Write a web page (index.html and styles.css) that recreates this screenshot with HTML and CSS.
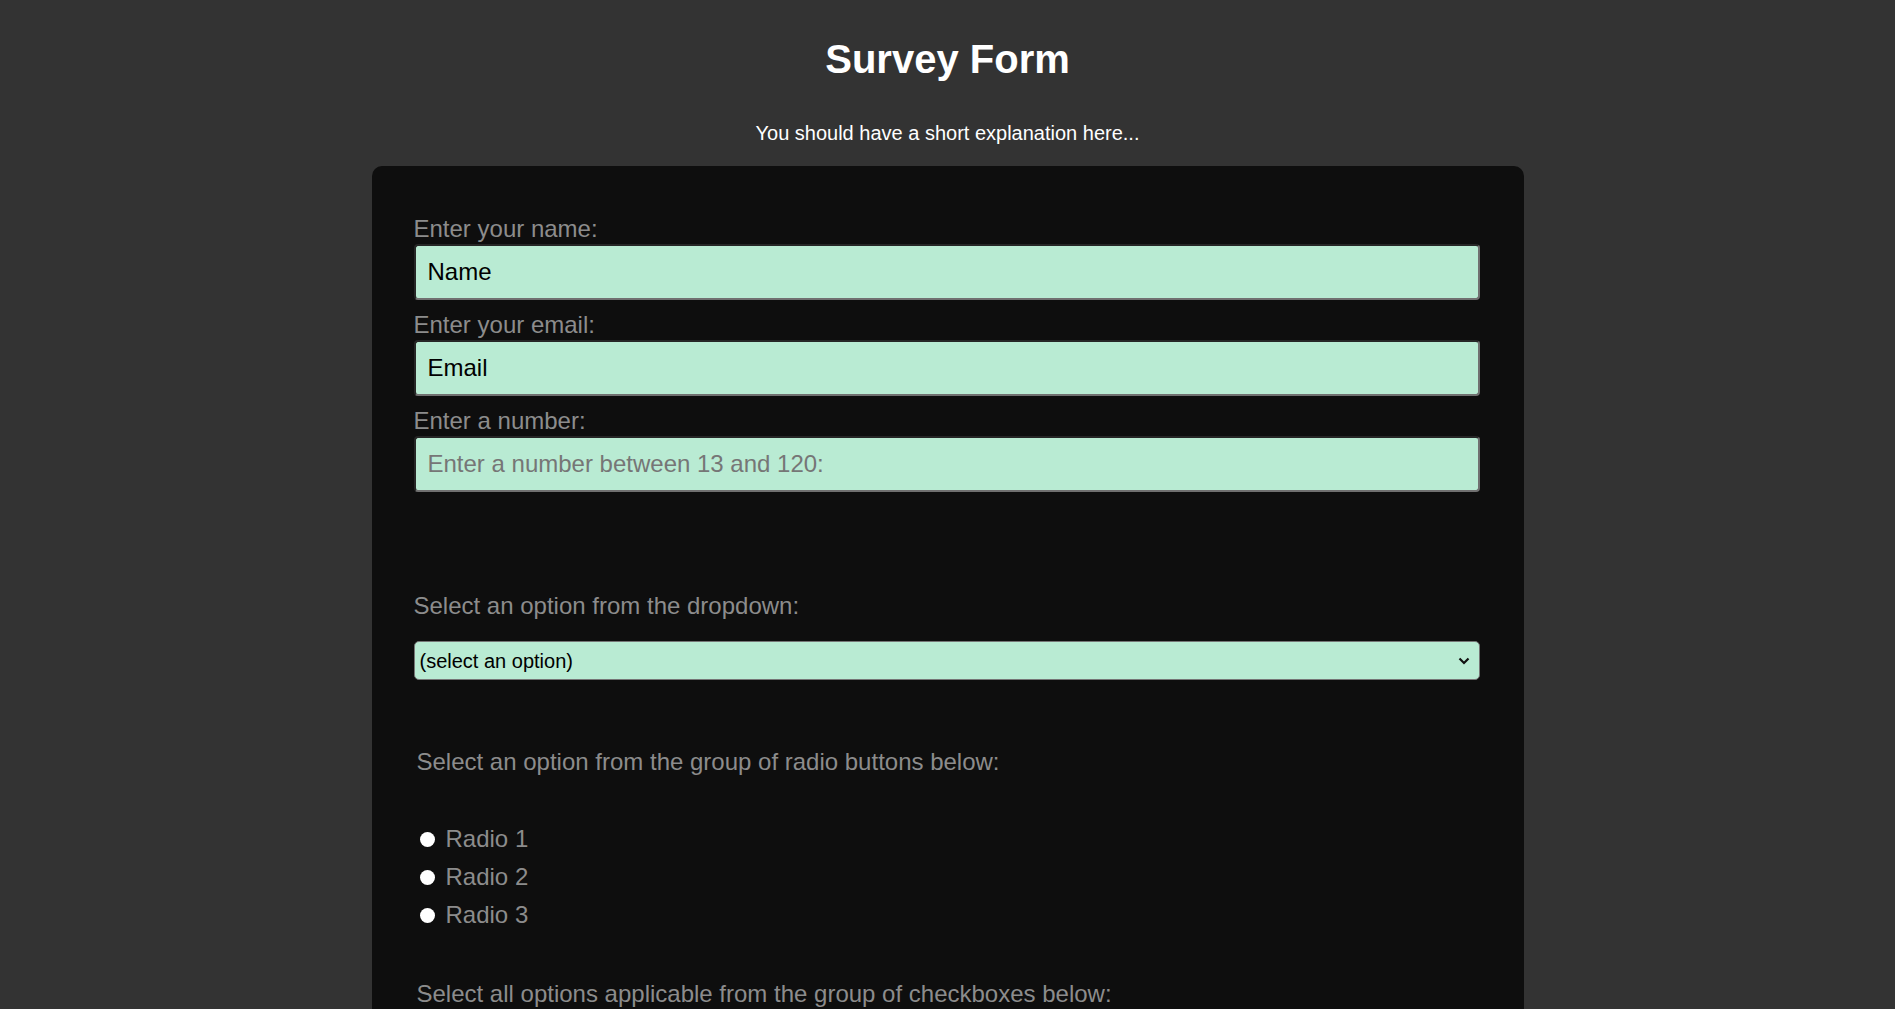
FILE: index.html
```html
<!DOCTYPE html>
<html lang="en">
<head>
<meta charset="utf-8">
<title>Survey Form</title>
<link rel="stylesheet" href="styles.css">
</head>
<body>
  <h1 id="title" class="title">Survey Form</h1>
  <p id="description" class="description">You should have a short explanation here...</p>
  <form id="survey-form" class="card">
    <div class="field">
      <label id="name-label" class="label" for="name">Enter your name:</label>
      <input id="name" class="text-input" type="text" value="Name">
    </div>
    <div class="field">
      <label id="email-label" class="label" for="email">Enter your email:</label>
      <input id="email" class="text-input" type="email" value="Email">
    </div>
    <div class="field">
      <label id="number-label" class="label" for="number">Enter a number:</label>
      <input id="number" class="text-input" type="number" min="13" max="120" placeholder="Enter a number between 13 and 120:">
    </div>

    <div class="dropdown-block">
      <label class="label" for="dropdown">Select an option from the dropdown:</label>
      <div class="select-wrap">
        <select id="dropdown" class="select">
          <option>(select an option)</option>
          <option>Option 1</option>
          <option>Option 2</option>
        </select>
        <svg class="chevron" width="12" height="8" viewBox="0 0 12 8"><path d="M1.5 1.5 L6 6 L10.5 1.5" fill="none" stroke="#111" stroke-width="2.2"/></svg>
      </div>
    </div>

    <p class="group-title">Select an option from the group of radio buttons below:</p>
    <div class="choices">
      <label class="choice"><input class="radio" type="radio" name="r"><span class="choice-text">Radio 1</span></label>
      <label class="choice"><input class="radio" type="radio" name="r"><span class="choice-text">Radio 2</span></label>
      <label class="choice"><input class="radio" type="radio" name="r"><span class="choice-text">Radio 3</span></label>
    </div>

    <p class="group-title">Select all options applicable from the group of checkboxes below:</p>
  </form>
</body>
</html>
```

FILE: styles.css
```css
html {
  scrollbar-width: none;
}
::-webkit-scrollbar {
  display: none;
}
body {
  margin: 0;
  background: #333333;
  font-family: "Liberation Sans", Arial, sans-serif;
  color: #ffffff;
}
.title {
  margin: 36px 0 0;
  font-size: 40px;
  line-height: 46px;
  font-weight: bold;
  text-align: center;
}
.description {
  margin: 40px 0 21px;
  font-size: 20px;
  line-height: 23px;
  text-align: center;
}
.card {
  box-sizing: border-box;
  width: 1152px;
  margin: 0 auto;
  padding: 49px 44px 200px 42px;
  background: #0e0e0e;
  border-radius: 10px;
}
.field {
  display: flex;
  flex-direction: column;
  gap: 1px;
  margin-bottom: 11px;
}
.label {
  display: block;
  font-size: 24px;
  line-height: 28px;
  color: #8c8c8c;
}
.text-input {
  box-sizing: border-box;
  width: 100%;
  height: 56px;
  margin: 0;
  padding: 0 12px;
  font-family: "Liberation Sans", Arial, sans-serif;
  font-size: 24px;
  color: #000;
  background: #b9ebd3;
  border-style: solid;
  border-width: 2px;
  border-color: #262626 #707070 #707070 #262626;
  border-radius: 4px;
  outline: none;
}
.text-input::placeholder {
  color: #767676;
}
.text-input::-webkit-inner-spin-button,
.text-input::-webkit-outer-spin-button {
  -webkit-appearance: none;
  margin: 0;
}
.dropdown-block {
  margin-top: 100px;
  display: flex;
  flex-direction: column;
  gap: 21px;
}
.select-wrap {
  position: relative;
}
.select {
  -webkit-appearance: none;
  appearance: none;
  box-sizing: border-box;
  width: 100%;
  height: 39px;
  margin: 0;
  padding: 0 30px 0 5px;
  font-family: "Liberation Sans", Arial, sans-serif;
  font-size: 20px;
  color: #000;
  background: #b9ebd3;
  border: 1px solid #767676;
  border-radius: 5px;
  outline: none;
}
.chevron {
  position: absolute;
  right: 10px;
  top: 16px;
  pointer-events: none;
}
.group-title {
  margin: 68px 0 0 3px;
  font-size: 24px;
  line-height: 28px;
  color: #8c8c8c;
}
.choices {
  margin-top: 44px;
  display: flex;
  flex-direction: column;
}
.choice {
  display: flex;
  align-items: center;
  height: 38px;
  font-size: 24px;
  color: #8c8c8c;
}
.choice-text {
  margin-left: 11px;
}
.radio {
  -webkit-appearance: none;
  appearance: none;
  flex: none;
  width: 15px;
  height: 15px;
  margin: 0 0 0 6px;
  border-radius: 50%;
  background: #ffffff;
  border: none;
}
.choices + .group-title {
  margin-top: 46px;
}
```
